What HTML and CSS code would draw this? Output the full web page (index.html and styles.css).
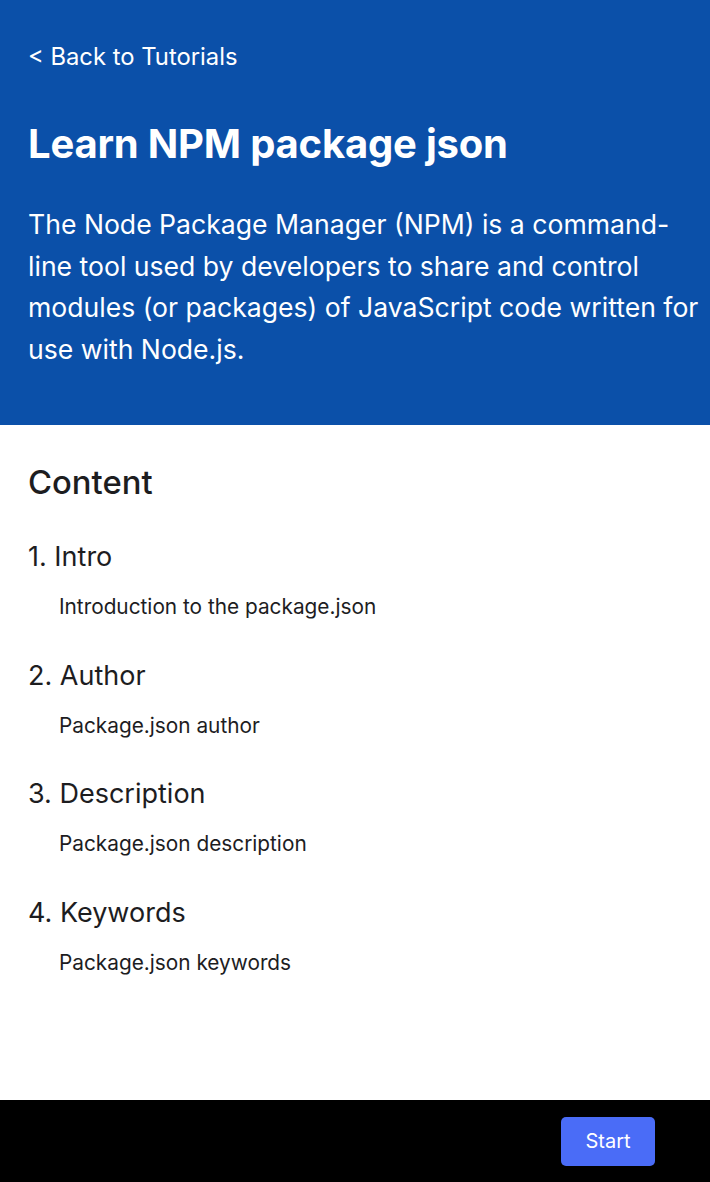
FILE: index.html
```html
<!DOCTYPE html>
<html lang="en">
<head>
<meta charset="utf-8">
<title>Learn NPM package json</title>
<link rel="stylesheet" href="styles.css">
</head>
<body>
<div class="page">
  <header class="hero">
    <a class="back" href="#">&lt; Back to Tutorials</a>
    <h1 class="title">Learn NPM package json</h1>
    <p class="intro">The Node Package Manager (NPM) is a command-line tool used by developers to share and control modules (or packages) of JavaScript code written for use with Node.js.</p>
  </header>
  <main class="content">
    <h2 class="content-title">Content</h2>
    <ol class="lessons">
      <li class="lesson">
        <div class="lesson-name">1. Intro</div>
        <div class="lesson-desc">Introduction to the package.json</div>
      </li>
      <li class="lesson">
        <div class="lesson-name">2. Author</div>
        <div class="lesson-desc">Package.json author</div>
      </li>
      <li class="lesson">
        <div class="lesson-name">3. Description</div>
        <div class="lesson-desc">Package.json description</div>
      </li>
      <li class="lesson">
        <div class="lesson-name">4. Keywords</div>
        <div class="lesson-desc">Package.json keywords</div>
      </li>
    </ol>
  </main>
  <footer class="bar">
    <button class="start">Start</button>
  </footer>
</div>
</body>
</html>
```
FILE: styles.css
```css
* { box-sizing: border-box; }
html, body { margin: 0; padding: 0; }
body {
  font-family: Inter, "Noto Sans", sans-serif;
  background: #fff;
  color: #1d1d1f;
}
.page {
  height: 1182px;
  display: flex;
  flex-direction: column;
}
.hero {
  background: #0b50a9;
  color: #fff;
  padding: 42px 6px 0 28px;
  height: 425px;
}
.back {
  display: block;
  color: #fff;
  text-decoration: none;
  font-size: 23.8px;
  line-height: 30px;
}
.title {
  margin: 49px 0 0 0;
  font-size: 40px;
  line-height: 46px;
  font-weight: 700;
  letter-spacing: -0.2px;
}
.intro {
  margin: 37px 0 0 0;
  font-size: 26.6px;
  line-height: 41.7px;
  font-weight: 400;
}
.content {
  flex: 1;
  padding: 37px 28px 0 28px;
}
.content-title {
  margin: 0;
  font-size: 32.8px;
  line-height: 40px;
  font-weight: 500;
}
.lessons {
  list-style: none;
  margin: 39px 0 0 0;
  padding: 0;
  display: flex;
  flex-direction: column;
  gap: 37.7px;
}
.lesson-name {
  font-size: 27px;
  line-height: 32px;
}
.lesson-desc {
  margin-top: 19px;
  padding-left: 31px;
  font-size: 20.8px;
  line-height: 30px;
}
.bar {
  background: #000;
  height: 82px;
  display: flex;
  justify-content: flex-end;
  align-items: center;
  padding-right: 55px;
}
.start {
  width: 94px;
  height: 49px;
  border: 0;
  border-radius: 5px;
  background: #4a6cf7;
  color: #fff;
  font-family: Inter, "Noto Sans", sans-serif;
  font-size: 20px;
}
```
